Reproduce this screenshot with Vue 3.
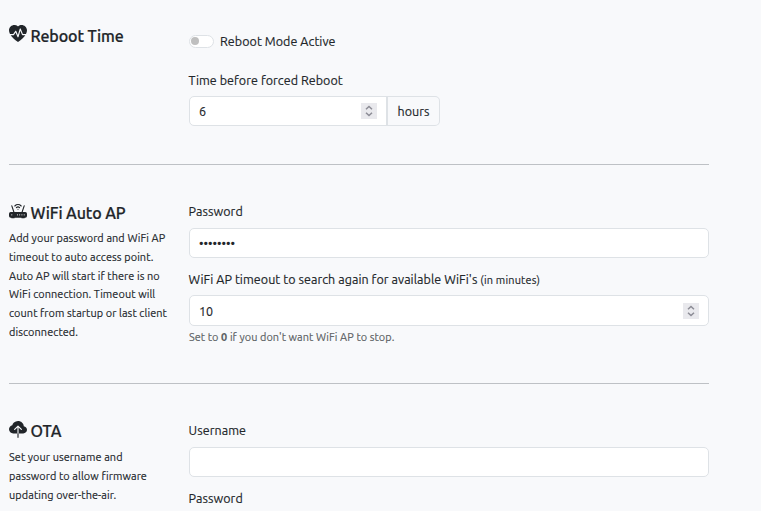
<script setup>
import { ref } from 'vue'

const rebootActive = ref(false)
const rebootHours = ref('6')
const password = ref('••••••••')
const timeout = ref('10')
const username = ref('')
</script>

<template>
  <main class="settings">
    <section class="row reboot">
      <aside class="info">
        <h2>
          <svg class="icon" viewBox="0 0 16 16"><path d="M1.475 9C2.702 10.84 4.779 12.871 8 15c3.221-2.129 5.298-4.16 6.525-6H12a.5.5 0 0 1-.464-.314l-1.457-3.642-1.598 5.593a.5.5 0 0 1-.945.049L5.889 6.568l-1.473 2.21A.5.5 0 0 1 4 9z" /><path d="M.88 8C-2.427 1.68 4.41-2 7.823 1.143q.09.083.176.171a3 3 0 0 1 .176-.17C11.59-2 18.426 1.68 15.12 8h-2.783l-1.874-4.686a.5.5 0 0 0-.945.049L7.921 8.956 6.464 5.314a.5.5 0 0 0-.88-.091L3.732 8z" /></svg>
          <span>Reboot Time</span>
        </h2>
      </aside>
      <div class="fields">
        <div class="switch-row" @click="rebootActive = !rebootActive">
          <span class="switch" :class="{ on: rebootActive }"><i></i></span>
          <span class="label">Reboot Mode Active</span>
        </div>
        <div class="label">Time before forced Reboot</div>
        <div class="group">
          <div class="control">
            <span>{{ rebootHours }}</span>
            <svg class="spin" viewBox="0 0 16 16"><path d="M5 6.3 8 3.5l3 2.8M5 9.7l3 2.8 3-2.8" /></svg>
          </div>
          <div class="addon">hours</div>
        </div>
      </div>
    </section>

    <section class="row wifi">
      <aside class="info">
        <h2>
          <svg class="icon" viewBox="0 0 16 16"><path d="M5.525 3.025a3.5 3.5 0 0 1 4.95 0 .5.5 0 1 0 .707-.707 4.5 4.5 0 0 0-6.364 0 .5.5 0 0 0 .707.707" /><path d="M6.94 4.44a1.5 1.5 0 0 1 2.12 0 .5.5 0 0 0 .708-.708 2.5 2.5 0 0 0-3.536 0 .5.5 0 0 0 .707.707Z" /><path d="M2.974 2.342a.5.5 0 1 0-.948.316L3.806 8H1.5A1.5 1.5 0 0 0 0 9.5v2A1.5 1.5 0 0 0 1.5 13H2a.5.5 0 0 0 .5.5h2A.5.5 0 0 0 5 13h6a.5.5 0 0 0 .5.5h2a.5.5 0 0 0 .5-.5h.5a1.5 1.5 0 0 0 1.5-1.5v-2A1.5 1.5 0 0 0 14.5 8h-2.306l1.78-5.342a.5.5 0 1 0-.948-.316L11.14 8H4.86zM2.5 11a.5.5 0 1 1 0-1 .5.5 0 0 1 0 1m4.5-.5a.5.5 0 1 1 1 0 .5.5 0 0 1-1 0m2.5.5a.5.5 0 1 1 0-1 .5.5 0 0 1 0 1m1.5-.5a.5.5 0 1 1 1 0 .5.5 0 0 1-1 0m2 0a.5.5 0 1 1 1 0 .5.5 0 0 1-1 0" /><path d="M8.5 5.5a.5.5 0 1 1-1 0 .5.5 0 0 1 1 0" /></svg>
          <span>WiFi Auto AP</span>
        </h2>
        <p>Add your password and WiFi AP<br>timeout to auto access point.<br>Auto AP will start if there is no<br>WiFi connection. Timeout will<br>count from startup or last client<br>disconnected.</p>
      </aside>
      <div class="fields">
        <div class="label">Password</div>
        <div class="control"><span class="dots">{{ password }}</span></div>
        <div class="label next">WiFi AP timeout to search again for available WiFi's <small>(in minutes)</small></div>
        <div class="control tall">
          <span>{{ timeout }}</span>
          <svg class="spin" viewBox="0 0 16 16"><path d="M5 6.3 8 3.5l3 2.8M5 9.7l3 2.8 3-2.8" /></svg>
        </div>
        <div class="help">Set to <b>0</b> if you don't want WiFi AP to stop.</div>
      </div>
    </section>

    <section class="row ota">
      <aside class="info">
        <h2>
          <svg class="icon" viewBox="0 0 16 16"><path d="M8 0a5.53 5.53 0 0 0-3.594 1.342c-.766.66-1.321 1.52-1.464 2.383C1.266 4.095 0 5.555 0 7.318 0 9.366 1.708 11 3.781 11H7.5V5.707L5.354 7.854a.5.5 0 1 1-.708-.708l3-3a.5.5 0 0 1 .708 0l3 3a.5.5 0 0 1-.708.708L8.5 5.707V11h4.188C14.502 11 16 9.57 16 7.773c0-1.636-1.242-2.969-2.834-3.194C12.923 1.999 10.69 0 8 0m-.5 14.5V11h1v3.5a.5.5 0 0 1-1 0" /></svg>
          <span>OTA</span>
        </h2>
        <p>Set your username and<br>password to allow firmware<br>updating over-the-air.</p>
      </aside>
      <div class="fields">
        <div class="label">Username</div>
        <div class="control">{{ username }}</div>
        <div class="label next">Password</div>
      </div>
    </section>
  </main>
</template>

<style>
body {
  background: #f8f9fb;
  overflow: hidden;
}
</style>

<style scoped>
.settings {
  box-sizing: border-box;
  width: 709px;
  height: 511px;
  padding-left: 9px;
  overflow: hidden;
  color: #212529;
  font-family: Ubuntu, "Noto Sans", sans-serif;
  font-size: 12.5px;
  letter-spacing: 0.06px;
  -webkit-text-stroke: 0.15px currentColor;
}
.row {
  box-sizing: border-box;
  display: flex;
  gap: 20px;
  border-bottom: 1px solid #bec1c5;
}
.reboot { height: 165px; padding-top: 25px; }
.wifi { height: 219px; padding-top: 37px; }
.ota { height: 200px; padding-top: 36px; }
.info { width: 160px; flex: none; white-space: nowrap; }
.fields { flex: 1; min-width: 0; }
h2 {
  display: flex;
  gap: 3.5px;
  height: 22px;
  margin: 0;
  font-size: 16px;
  line-height: 22px;
  font-weight: 500;
  letter-spacing: -0.1px;
  -webkit-text-stroke: 0.22px currentColor;
}
.icon {
  display: block;
  flex: none;
  width: 18px;
  height: 18px;
  fill: currentColor;
}
.wifi .icon, .ota .icon { margin-top: 0.5px; }
p {
  margin: 5px 0 0;
  font-size: 10.9px;
  line-height: 18.75px;
  letter-spacing: 0.08px;
}
.ota p { margin-top: 6px; }
.label { height: 20px; line-height: 20px; white-space: nowrap; }
.fields > .label { margin-left: -0.4px; }
.switch-row {
  display: flex;
  align-items: center;
  gap: 6px;
  height: 20px;
  margin: 6px 0 19px;
}
.switch {
  box-sizing: border-box;
  display: flex;
  align-items: center;
  width: 25px;
  height: 13px;
  padding: 0 1px;
  border: 1px solid #dee2e6;
  border-radius: 7px;
  background: #fff;
}
.switch i { width: 8px; height: 8px; border-radius: 50%; background: #bfbfbf; }
.switch.on { justify-content: flex-end; }
.group { display: flex; width: 251px; margin-top: 6px; }
.control {
  box-sizing: border-box;
  display: flex;
  align-items: center;
  justify-content: space-between;
  height: 30px;
  margin-top: 7px;
  padding: 0 9px;
  border: 1px solid #dee2e6;
  border-radius: 5px;
  background: #fff;
}
.wifi .fields { margin-top: -1px; }
.control.tall { height: 31px; margin-top: 6px; }
.group .control { flex: 1; margin: 0; border-radius: 5px 0 0 5px; }
.addon {
  box-sizing: border-box;
  width: 54px;
  margin-left: -1px;
  border: 1px solid #dee2e6;
  border-left-width: 2px;
  border-radius: 0 5px 5px 0;
  line-height: 28px;
  text-align: center;
}
.spin {
  width: 16px;
  height: 16px;
  background: #e9e9ed;
  fill: none;
  stroke: #8c8c95;
  stroke-width: 1.5;
}
.dots { letter-spacing: 0; }
.next { margin-top: 11px; }
small { font-size: 10.9px; letter-spacing: 0.18px; }
.help { height: 18px; margin-top: 2px; line-height: 18px; font-size: 10.9px; color: #5b5f63; letter-spacing: 0.07px; }
</style>
